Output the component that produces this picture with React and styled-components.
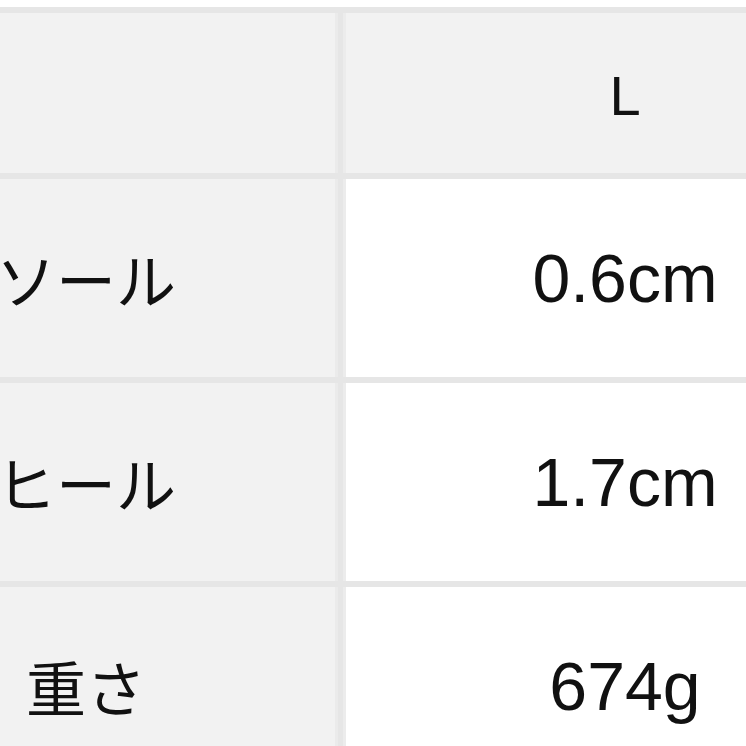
import styled, { createGlobalStyle } from 'styled-components';

const GlobalStyle = createGlobalStyle`
  html, body {
    margin: 0;
    padding: 0;
    background: #ffffff;
    overflow: hidden;
  }
  body {
    width: 746px;
    height: 746px;
  }
`;

const rows = [
  { label: 'ソール', value: '0.6cm' },
  { label: 'ヒール', value: '1.7cm' },
  { label: '重さ', value: '674g' },
];

function App() {
  return (
    <>
      <GlobalStyle />
      <Page>
        <SizeTable>
          <LabelCell $height={160} />
          <ValueCell $height={160} $head>
            <HeadText>L</HeadText>
          </ValueCell>
          {rows.map((row) => (
            <Row key={row.label}>
              <LabelCell $height={198}>
                <LabelText>{row.label}</LabelText>
              </LabelCell>
              <ValueCell $height={198}>
                <ValueText>{row.value}</ValueText>
              </ValueCell>
            </Row>
          ))}
        </SizeTable>
      </Page>
    </>
  );
}

const Row = styled.div`
  display: contents;
`;

const Page = styled.div`
  width: 746px;
  height: 746px;
  overflow: hidden;
  padding-top: 7px;
  box-sizing: border-box;
`;

const SizeTable = styled.div`
  display: grid;
  grid-template-columns: 506px 558px;
  column-gap: 11px;
  row-gap: 6px;
  width: 1075px;
  margin-left: -171px;
  padding-top: 6px;
  background: #e6e6e6;
`;

const LabelCell = styled.div`
  display: flex;
  align-items: center;
  justify-content: center;
  height: ${({ $height }) => $height}px;
  background: #f2f2f2;
  box-shadow: 3px 0 0 #ebebeb;
`;

const ValueCell = styled.div`
  display: flex;
  align-items: center;
  justify-content: center;
  height: ${({ $height }) => $height}px;
  background: ${({ $head }) => ($head ? '#f2f2f2' : '#ffffff')};
  box-shadow: -3px 0 0 #ececec;
`;

const LabelText = styled.span`
  font-family: "Noto Sans CJK JP", "Noto Sans", sans-serif;
  font-size: 60px;
  color: #111111;
  margin-left: 8px;
  line-height: 1;
`;

const ValueText = styled.span`
  font-family: "Liberation Sans", Arial, sans-serif;
  font-size: 68px;
  color: #111111;
  line-height: 1;
`;

const HeadText = styled.span`
  font-family: "Liberation Sans", Arial, sans-serif;
  font-size: 56px;
  color: #111111;
  line-height: 1;
  margin-top: 6px;
`;

export default App;
